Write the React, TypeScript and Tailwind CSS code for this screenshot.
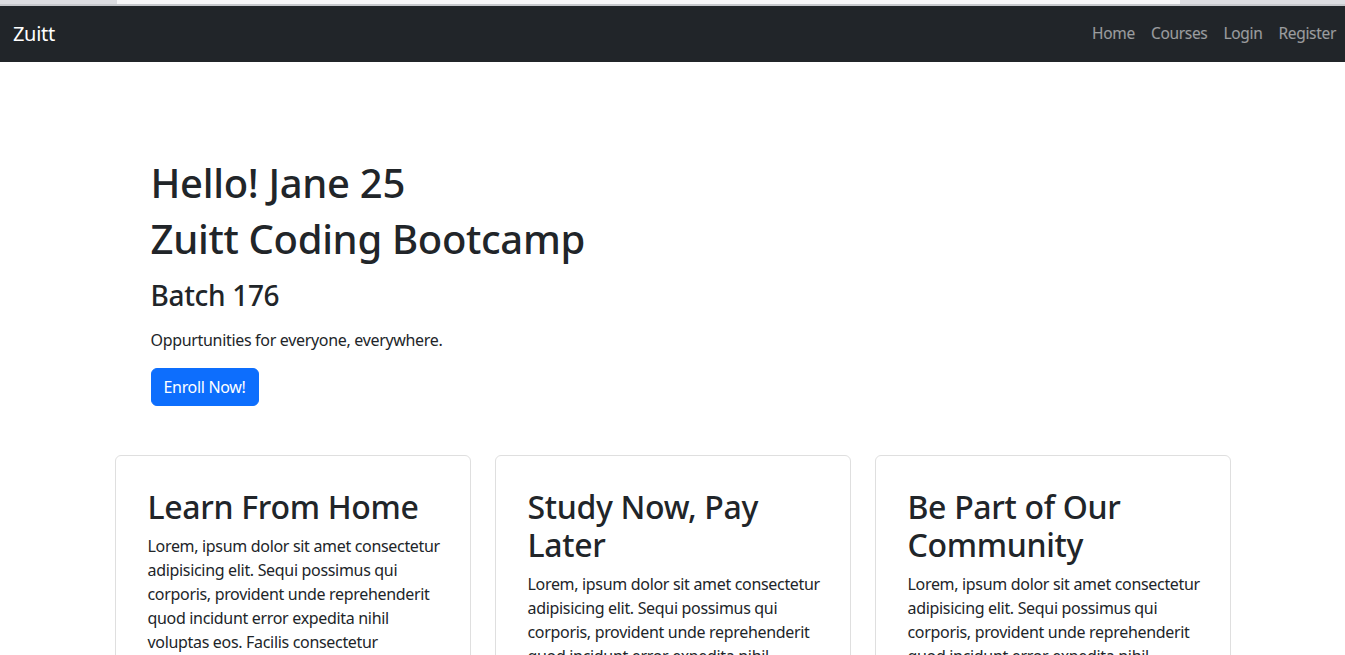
import React from 'react';

const font = { fontFamily: '"Noto Sans", "Open Sans", sans-serif' };

const lorem =
  'Lorem, ipsum dolor sit amet consectetur adipisicing elit. Sequi possimus qui corporis, provident unde reprehenderit quod incidunt error expedita nihil voluptas eos. Facilis consectetur quisquam ipsa, dolorum placeat sapiente rerum.';

const highlights = [
  { title: 'Learn From Home', text: lorem },
  { title: 'Study Now, Pay Later', text: lorem },
  { title: 'Be Part of Our Community', text: lorem },
];

const links = ['Home', 'Courses', 'Login', 'Register'];

export default function App() {
  return (
    <div className="min-h-screen bg-white tracking-[-0.02em] text-[#212529]" style={font}>
      {/* browser strip */}
      <div className="flex h-1">
        <div className="w-[117px] bg-[#dcdde1]" />
        <div className="w-[1063px] bg-[#f7f7f8]" />
        <div className="flex-1 bg-[#dcdde1]" />
      </div>
      <div className="h-[2px] bg-[#c6c8cc]" />

      {/* Navbar */}
      <nav className="flex h-14 items-center justify-between bg-[#212529] pl-[13px] pr-px">
        <span className="text-xl text-white">Zuitt</span>
        <div className="flex">
          {links.map((link) => (
            <a key={link} className="px-2 text-[15.5px] text-white/55">
              {link}
            </a>
          ))}
        </div>
      </nav>

      <div className="mx-auto w-[1140px] px-3">
        {/* Banner */}
        <div className="pl-9 pt-[97px]">
          <h1 className="mb-2 text-[40px] font-medium leading-[1.2]">Hello! Jane 25</h1>
          <h1 className="mb-2 text-[40px] font-medium leading-[1.2]">Zuitt Coding Bootcamp</h1>
          <h3 className="mb-[15px] mt-4 text-[28px] font-medium leading-[1.2]">Batch 176</h3>
          <p className="mb-4 text-base leading-6">Oppurtunities for everyone, everywhere.</p>
          <button className="rounded-md border border-[#0d6efd] bg-[#0d6efd] px-3 py-1.5 text-base leading-6 text-white">
            Enroll Now!
          </button>
        </div>

        {/* Highlights */}
        <div className="mt-[49px] grid grid-cols-3 gap-6">
          {highlights.map((item) => (
            <div key={item.title} className="rounded-md border border-[#dfdfdf] py-8 pl-8 pr-7">
              <h2 className="mb-2 text-[32px] font-medium leading-[1.2]">{item.title}</h2>
              <p className="text-base leading-6">{item.text}</p>
            </div>
          ))}
        </div>
      </div>
    </div>
  );
}
